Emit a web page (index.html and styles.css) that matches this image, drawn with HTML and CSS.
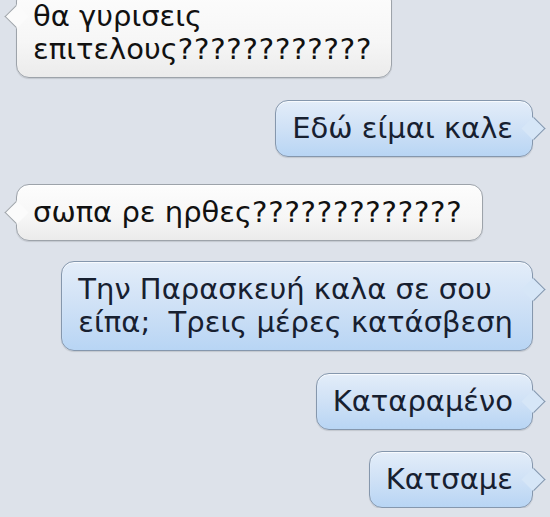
FILE: index.html
```html
<!DOCTYPE html>
<html lang="el">
<head>
<meta charset="utf-8">
<title>Messages</title>
<link rel="stylesheet" href="styles.css">
</head>
<body>
<div class="thread">
  <div class="msg in first">θα γυρισεις<br>επιτελους<span class="q">????????????</span></div>
  <div class="msg out m22">Εδώ είμαι καλε</div>
  <div class="msg in m27">σωπα ρε ηρθες<span class="q">?????????????</span></div>
  <div class="msg out m20">Την Παρασκευή καλα σε σου<br>είπα;&nbsp; Τρεις μέρες κατάσβεση</div>
  <div class="msg out m22">Καταραμένο</div>
  <div class="msg out m21">Κατσαμε</div>
</div>
</body>
</html>
```
FILE: styles.css
```css
html, body {
  margin: 0;
  padding: 0;
  background: #dde2ea;
  overflow: hidden;
}
.thread {
  display: flex;
  flex-direction: column;
  padding: 0 17px 0 16px;
  font-family: "DejaVu Sans", "Liberation Sans", Arial, sans-serif;
  font-size: 29px;
  line-height: 33px;
}
.q { letter-spacing: 0.8px; }
.msg {
  position: relative;
  padding: 11px 19px 11px 16px;
  border-radius: 13px;
  border: 1px solid #9da3aa;
  white-space: nowrap;
  box-shadow: 0 1px 1px rgba(0,0,0,0.12), inset 0 1px 1px rgba(255,255,255,0.8);
}
.msg.first { margin-top: -12px; }
.msg.m20 { margin-top: 20px; }
.msg.m21 { margin-top: 21px; }
.msg.m22 { margin-top: 22px; }
.msg.m27 { margin-top: 27px; }
.msg.in {
  align-self: flex-start;
  color: #111;
  background: linear-gradient(#fdfdfd, #f6f6f6 60%, #ebebeb);
}
.msg.out {
  align-self: flex-end;
  color: #172030;
  border-color: #8597ad;
  background: linear-gradient(#e3edf9, #cfe1f6 50%, #b8d5f4);
}
.msg::before {
  content: "";
  position: absolute;
  top: 19px;
  width: 17px;
  height: 17px;
  transform: rotate(45deg);
  border: 1px solid transparent;
  box-sizing: border-box;
}
.msg.in::before {
  left: -9.5px;
  background: #fbfbfb;
  border-left-color: #9da3aa;
  border-bottom-color: #9da3aa;
}
.msg.out::before {
  right: -9.5px;
  background: #d6e6f7;
  border-top-color: #8597ad;
  border-right-color: #8597ad;
}
```
